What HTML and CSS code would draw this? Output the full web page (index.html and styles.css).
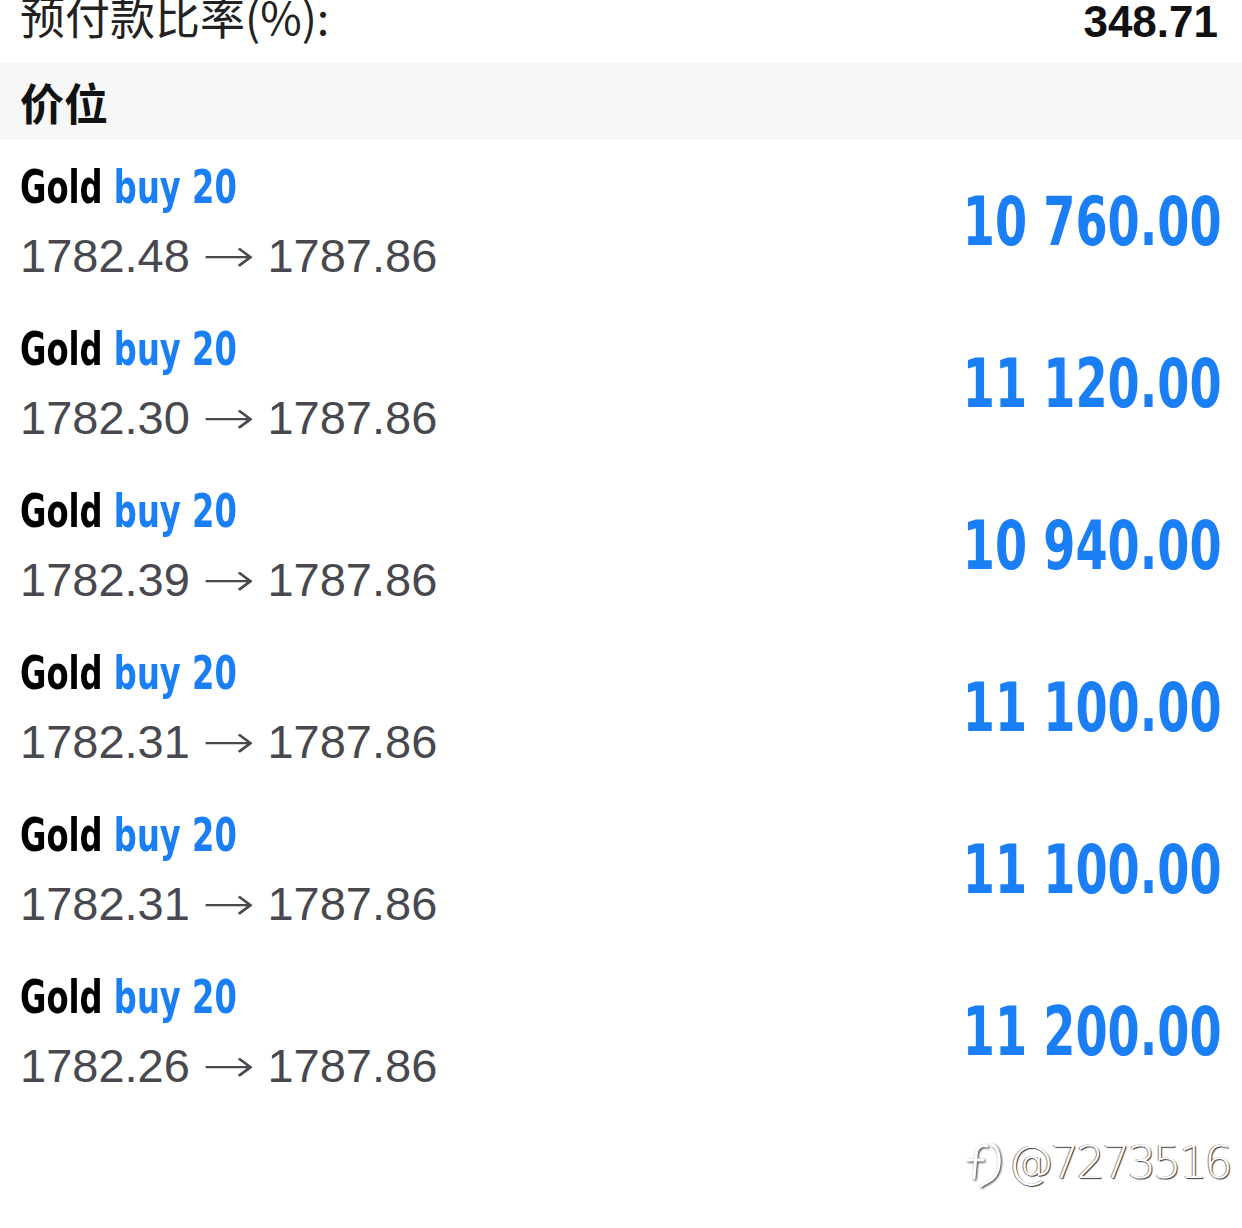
FILE: index.html
```html
<!DOCTYPE html>
<html lang="zh">
<head>
  <meta charset="UTF-8">
  <meta name="viewport" content="width=device-width, initial-scale=1.0">
  <title>价位</title>
  <link rel="stylesheet" href="styles.css">
</head>
<body>

  <!-- Summary row, scrolled partly out of view -->
  <div class="summary-row">
    <span class="summary-label">预付款比率(%):</span>
    <span class="summary-value">348.71</span>
  </div>

  <!-- Section header -->
  <div class="section-header">价位</div>

  <!-- Positions -->
  <div class="positions">
    <div class="position">
      <div class="position-info">
        <div class="position-title">Gold <span class="side">buy 20</span></div>
        <div class="position-prices">1782.48 <span class="arrow">→</span> 1787.86</div>
      </div>
      <div class="position-profit">10 760.00</div>
    </div>
    <div class="position">
      <div class="position-info">
        <div class="position-title">Gold <span class="side">buy 20</span></div>
        <div class="position-prices">1782.30 <span class="arrow">→</span> 1787.86</div>
      </div>
      <div class="position-profit">11 120.00</div>
    </div>
    <div class="position">
      <div class="position-info">
        <div class="position-title">Gold <span class="side">buy 20</span></div>
        <div class="position-prices">1782.39 <span class="arrow">→</span> 1787.86</div>
      </div>
      <div class="position-profit">10 940.00</div>
    </div>
    <div class="position">
      <div class="position-info">
        <div class="position-title">Gold <span class="side">buy 20</span></div>
        <div class="position-prices">1782.31 <span class="arrow">→</span> 1787.86</div>
      </div>
      <div class="position-profit">11 100.00</div>
    </div>
    <div class="position">
      <div class="position-info">
        <div class="position-title">Gold <span class="side">buy 20</span></div>
        <div class="position-prices">1782.31 <span class="arrow">→</span> 1787.86</div>
      </div>
      <div class="position-profit">11 100.00</div>
    </div>
    <div class="position">
      <div class="position-info">
        <div class="position-title">Gold <span class="side">buy 20</span></div>
        <div class="position-prices">1782.26 <span class="arrow">→</span> 1787.86</div>
      </div>
      <div class="position-profit">11 200.00</div>
    </div>
  </div>

  <!-- Watermark -->
  <div class="watermark">
    <svg class="watermark-logo" width="44" height="50" viewBox="0 0 44 50">
      <path d="M24 8 C17 6 13 11 13 18 L11 40 M5 22 L20 22 M30 7 C38 13 38 29 32 38 C28 44 22 44 18 48" fill="none" stroke="#fff" stroke-width="3" stroke-linecap="round"/>
    </svg>
    <span>@7273516</span>
  </div>

</body>
</html>
```

FILE: styles.css
```css
body {
  margin: 0;
  padding: 0;
  width: 1242px;
  height: 1228px;
  overflow: hidden;
  position: relative;
  background: #fff;
  font-family: "Liberation Sans", "Noto Sans CJK SC", sans-serif;
}

/* Summary row */
.summary-row {
  display: flex;
  justify-content: space-between;
  height: 63px;
  padding: 0 24px 0 20px;
  box-sizing: border-box;
  font-size: 44px;
  line-height: 44px;
  color: #111;
}

.summary-label {
  font-family: "Noto Sans CJK SC", sans-serif;
  font-size: 45px;
  color: #222;
  margin-top: -6px;
}

.summary-value {
  font-weight: bold;
}

/* Section header */
.section-header {
  height: 77px;
  background: #f7f7f7;
  padding: 0 20px;
  display: flex;
  align-items: center;
  font-family: "Noto Sans CJK SC", sans-serif;
  font-weight: bold;
  font-size: 44px;
  color: #111;
}

/* Position rows */
.position {
  height: 162px;
  display: flex;
  justify-content: space-between;
  align-items: center;
  padding: 0 20px;
}

.position-info {
  align-self: flex-start;
  padding-top: 17px;
}

/* no condensed face installed, so squeeze the bold one */
.position-title {
  font-family: "DejaVu Sans", sans-serif;
  font-weight: bold;
  font-size: 46px;
  line-height: 60px;
  color: #000;
  transform: scaleX(0.70);
  transform-origin: left center;
  white-space: nowrap;
}

.side {
  color: #1a7ff5;
}

.position-prices {
  font-size: 47px;
  line-height: 78px;
  color: #48484e;
  white-space: nowrap;
}

.arrow {
  display: inline-block;
  font-family: "DejaVu Sans", sans-serif;
  font-weight: 200;
  transform: scaleX(1.35);
  margin: 0 6px;
}

.position-profit {
  font-family: "DejaVu Sans", sans-serif;
  font-weight: bold;
  font-size: 68px;
  color: #1a7ff5;
  transform: scaleX(0.68);
  transform-origin: right center;
  white-space: nowrap;
}

/* Watermark */
.watermark {
  position: absolute;
  right: 12px;
  top: 1136px;
  display: flex;
  align-items: center;
  gap: 2px;
  font-family: "DejaVu Sans", sans-serif;
  font-weight: 200;
  font-size: 45px;
  letter-spacing: -3px;
  color: #fff;
  text-shadow: 1px 1px 1px #333, -1px 0 0 #888;
}

.watermark-logo {
  filter: drop-shadow(1px 1px 1px #333);
}
```
